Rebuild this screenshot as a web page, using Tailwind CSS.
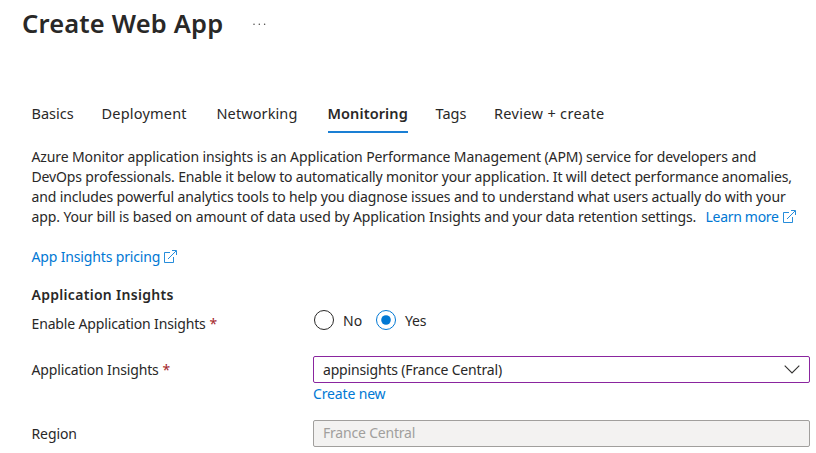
<!DOCTYPE html>
<html lang="en">
<head>
<meta charset="utf-8">
<title>Create Web App</title>
<script src="https://cdn.jsdelivr.net/npm/@tailwindcss/browser@4"></script>
</head>
<body class="bg-white">
<main class="w-[816px] h-[453px] overflow-hidden flex flex-col font-['Noto_Sans',sans-serif] text-[14px] leading-5 text-[#292827] whitespace-nowrap">
  <header class="flex h-12 pl-[22px] pt-[5px] shrink-0">
    <h1 class="w-[230px] text-[25.5px] leading-9 font-semibold tracking-[0.17px]">Create Web App</h1>
    <svg class="mt-[18px]" width="14" height="3" fill="#484644"><circle cx="2" cy="1.300" r=".75"/><circle cx="7.300" cy="1.300" r=".75"/><circle cx="12.600" cy="1.300" r=".75"/></svg>
  </header>
  <nav class="flex mt-[55px] h-[30px] pl-[31.5px] shrink-0 text-[14.5px]">
    <span class="w-[70px]">Basics</span>
    <span class="w-[115px] tracking-[0.2px]">Deployment</span>
    <span class="w-[111px] tracking-[0.1px]">Networking</span>
    <span class="w-[80px] mr-[28px] font-semibold border-b-2 border-[#1a7fd4] tracking-[0.1px]">Monitoring</span>
    <span class="w-[58.5px]">Tags</span>
    <span class="tracking-[0.33px]">Review + create</span>
  </nav>
  <section class="mt-3.5 pl-[31.5px] flex flex-col items-start shrink-0">
    <span class="tracking-[-0.113px]">Azure Monitor application insights is an Application Performance Management (APM) service for developers and</span>
    <span class="tracking-[-0.145px]">DevOps professionals. Enable it below to automatically monitor your application. It will detect performance anomalies,</span>
    <span class="tracking-[-0.135px]">and includes powerful analytics tools to help you diagnose issues and to understand what users actually do with your</span>
    <div class="flex"><span class="w-[674px] tracking-[-0.118px]">app. Your bill is based on amount of data used by Application Insights and your data retention settings.</span>
      <a class="flex text-[#0078d4]"><span class="w-[77.5px] tracking-[-0.3px]">Learn more</span><svg class="mt-[3px]" width="13" height="13" fill="none" stroke="currentColor" stroke-width=".85"><path d="M6 2.500H.5v10h9V7M4 9l8-8M8 .5h4.500V5"/></svg></a></div>
    <a class="flex mt-5 text-[#0078d4]"><span class="w-[132.5px] tracking-[-0.15px]">App Insights pricing</span><svg class="mt-[3px]" width="13" height="13" fill="none" stroke="currentColor" stroke-width=".85"><path d="M6 2.500H.5v10h9V7M4 9l8-8M8 .5h4.500V5"/></svg></a>
    <h2 class="mt-[18px] font-semibold tracking-[0.3px]">Application Insights</h2>
  </section>
  <section class="pl-[31.5px] pr-1.5 flex flex-col shrink-0">
    <div class="flex mt-[5px] h-[46px]">
      <div class="w-[282.5px] flex pt-[4px]"><span class="w-[178px] tracking-[-0.15px]">Enable Application Insights</span><span class="text-[#a4262c]">*</span></div>
      <svg width="20" height="20" class="shrink-0" fill="none"><circle cx="10" cy="10" r="9.500" stroke="#292827"/></svg>
      <span class="ml-[9px] w-[33px] pt-px">No</span>
      <svg width="20" height="20" class="shrink-0" fill="none"><circle cx="10" cy="10" r="9.500" stroke="#0078d4"/><circle cx="10" cy="10" r="4.800" fill="#0078d4"/></svg>
      <span class="ml-[9px] pt-px tracking-[-0.15px]">Yes</span>
    </div>
    <div class="flex">
      <div class="w-[281.5px] flex pt-[4px]"><span class="w-[131px] tracking-[-0.15px]">Application Insights</span><span class="text-[#a4262c]">*</span></div>
      <div class="flex flex-col w-[497px]">
        <div class="h-[27px] border border-[#8a259f] rounded-[2px] flex items-center justify-between pl-[9px] pr-[9px]"><span class="tracking-[-0.17px]">appinsights (France Central)</span><svg width="16" height="9" fill="none" stroke="#323130" stroke-width="1.100"><path d="M.7 .7 8 8l7.300-7.300"/></svg></div>
        <a class="text-[#0078d4] mt-px tracking-[-0.15px]">Create new</a>
      </div>
    </div>
    <div class="flex mt-4">
      <div class="w-[281.5px] pt-[4px] tracking-[-0.1px]">Region</div>
      <div class="w-[497px] h-[27px] border border-[#a19f9d] rounded-[2px] bg-[#f3f2f1] text-[#a19f9d] flex items-start pt-[2px] pl-[9px]"><span class="tracking-[-0.2px]">France Central</span></div>
    </div>
  </section>
</main>
</body>
</html>
